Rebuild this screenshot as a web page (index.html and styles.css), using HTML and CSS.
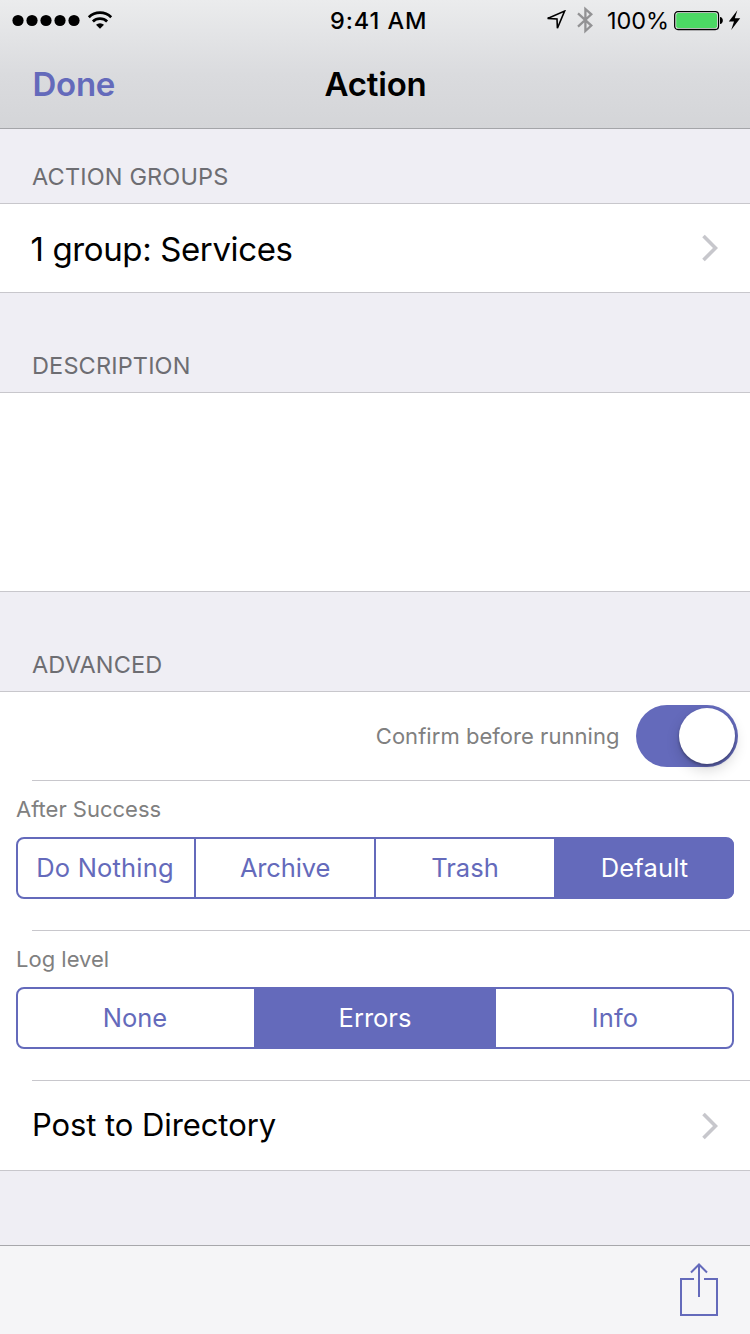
FILE: index.html
```html
<!DOCTYPE html>
<html lang="en">
<head>
<meta charset="utf-8">
<title>Action</title>
<link rel="stylesheet" href="styles.css">
</head>
<body>
<div class="screen">
  <header class="header">
    <div class="status">
      <div class="status-left">
        <svg width="102" height="22" viewBox="0 0 102 22">
          <circle cx="6" cy="11.5" r="5.6"/><circle cx="20" cy="11.5" r="5.6"/><circle cx="34" cy="11.5" r="5.6"/><circle cx="48" cy="11.5" r="5.6"/><circle cx="62" cy="11.5" r="5.6"/>
          <g fill="none" stroke="#000" stroke-width="2.7">
            <path d="M76.8 8.2A16.2 16.2 0 0 1 99.2 8.2"/>
            <path d="M80.9 12.5A10.2 10.2 0 0 1 95.1 12.5"/>
          </g>
          <path d="M84 15.7A6 6 0 0 1 92 15.7L88 19.8Z"/>
        </svg>
      </div>
      <div class="status-time">9:41 AM</div>
      <div class="status-right">
        <svg class="location" width="20" height="21" viewBox="0 0 20 21"><path d="M1.6 8.4L18.6 1.1L11.4 18.2L11 8.9Z" fill="none" stroke="#000" stroke-width="1.6"/></svg>
        <svg class="bluetooth" width="16" height="28" viewBox="0 0 16 28"><path d="M1 7.3L14.3 19.6L8.4 25V3L14.3 8.3L1 20.6" fill="none" stroke="#929294" stroke-width="2.3"/></svg>
        <span class="percent">100%</span>
        <svg class="battery" width="67" height="22" viewBox="0 0 67 22">
          <rect x="0.7" y="1.7" width="43.8" height="17.8" rx="3.2" fill="#f4f6f5" stroke="#000" stroke-width="1.3"/>
          <rect x="2.2" y="3.1" width="40.8" height="15" rx="1.8" fill="#4cd964"/>
          <path d="M46 7C49.8 7.2 49.8 13.8 46 14Z"/>
          <path d="M63.4 0.2L54.8 11.6H60L57.2 20L66.2 8.2H60.8Z"/>
        </svg>
      </div>
    </div>
    <div class="nav">
      <span class="done">Done</span>
      <span class="title">Action</span>
      <span></span>
    </div>
  </header>

  <h2 class="section first">ACTION GROUPS</h2>
  <div class="group">
    <div class="row link services">
      <span class="row-title">1 group: Services</span>
      <svg class="chevron" width="17" height="28" viewBox="0 0 17 28"><path d="M2.5 2L14.5 14L2.5 26" fill="none" stroke="#c7c7cc" stroke-width="3.6"/></svg>
    </div>
  </div>

  <h2 class="section">DESCRIPTION</h2>
  <div class="group description"></div>

  <h2 class="section">ADVANCED</h2>
  <div class="group">
    <div class="row confirm">
      <span class="label confirm-label">Confirm before running</span>
      <span class="switch"><span class="knob"></span></span>
    </div>
    <div class="separator"></div>
    <div class="row field">
      <span class="label">After Success</span>
      <div class="segments four">
        <span class="segment nothing">Do Nothing</span><span class="segment archive">Archive</span><span class="segment">Trash</span><span class="segment on default">Default</span>
      </div>
    </div>
    <div class="separator"></div>
    <div class="row field">
      <span class="label">Log level</span>
      <div class="segments three">
        <span class="segment none">None</span><span class="segment on">Errors</span><span class="segment info">Info</span>
      </div>
    </div>
    <div class="separator"></div>
    <div class="row link post">
      <span class="row-title">Post to Directory</span>
      <svg class="chevron" width="17" height="28" viewBox="0 0 17 28"><path d="M2.5 2L14.5 14L2.5 26" fill="none" stroke="#c7c7cc" stroke-width="3.6"/></svg>
    </div>
  </div>

  <footer class="toolbar">
    <svg width="40" height="56" viewBox="0 0 40 56" fill="none" stroke="#646abb" stroke-width="2">
      <path d="M15 18H2V54H38V18H25"/>
      <path d="M20 36V3.5M12 11.5L20 3.5L28 11.5"/>
    </svg>
  </footer>
</div>
</body>
</html>
```

FILE: styles.css
```css
* { box-sizing: border-box; }

body {
  margin: 0;
  font-family: Inter, "Liberation Sans", sans-serif;
  color: #000;
}

.screen {
  width: 750px;
  height: 1334px;
  background: #efeef4;
  display: flex;
  flex-direction: column;
  overflow: hidden;
}

svg { display: block; flex: none; }

/* Header */
.header {
  height: 129px;
  border-bottom: 1px solid #a4a5a9;
  background: linear-gradient(#ebeced 0, #e3e4e6 35px, #dadbde 75px, #d4d5d8 128px);
}

.status {
  height: 40px;
  display: grid;
  grid-template-columns: 330px auto 1fr;
}

.status-left { padding: 9px 0 0 12px; }

.status-time {
  font-size: 23.5px;
  font-weight: 500;
  letter-spacing: 0.93px;
  line-height: 41px;
}

.status-right {
  display: flex;
  justify-content: flex-end;
  padding-right: 9px;
}

.location { margin: 10px 11px 0 0; }
.bluetooth { margin: 6px 14px 0 0; }

.percent {
  width: 67px;
  font-size: 23.5px;
  letter-spacing: -0.1px;
  line-height: 41px;
}

.battery { margin-top: 10px; }

.nav {
  height: 88px;
  padding: 0 32.5px;
  display: grid;
  grid-template-columns: 292px auto 1fr;
  font-size: 33px;
  font-weight: 600;
  line-height: 88px;
}

.done { color: #646abb; letter-spacing: -0.25px; }
.title { letter-spacing: -0.222px; }

/* Section headings */
.section {
  height: 99px;
  margin: 0;
  padding: 0 32px 14.5px;
  display: flex;
  align-items: flex-end;
  font-size: 23.5px;
  font-weight: 400;
  line-height: 24px;
  letter-spacing: 0.15px;
  color: #6d6d72;
}

.section.first { height: 74px; }

.group {
  background: #fff;
  border-top: 1px solid #c8c7cc;
  border-bottom: 1px solid #c8c7cc;
}

.description { height: 200px; }

.separator {
  height: 1px;
  margin-left: 32px;
  background: #c8c7cc;
}

/* Rows */
.link {
  display: flex;
  align-items: center;
  justify-content: space-between;
  padding: 0 32px;
}

.services {
  height: 88px;
  padding-left: 30.5px;
  font-size: 33px;
  letter-spacing: -0.381px;
}

.services .row-title { padding-top: 2px; }

.post {
  height: 89px;
  font-size: 31px;
  letter-spacing: -0.08px;
}

.post .row-title { padding-bottom: 3px; }
.post .chevron { margin-top: 1px; }

.label {
  display: block;
  font-size: 22px;
  line-height: 28px;
  color: #808080;
}

.confirm {
  height: 88px;
  padding-right: 12px;
  display: flex;
  align-items: center;
  justify-content: flex-end;
  gap: 16.5px;
}

.confirm-label { letter-spacing: 0.04px; padding-bottom: 1px; }

.switch {
  width: 102px;
  height: 62px;
  padding: 3px;
  border-radius: 31px;
  background: #646abb;
  display: flex;
  justify-content: flex-end;
}

.knob {
  width: 56px;
  height: 56px;
  border-radius: 50%;
  background: #fff;
  box-shadow: 0 6px 14px rgba(0, 0, 0, 0.16), 0 2px 3px rgba(0, 0, 0, 0.3);
}

.field {
  height: 149px;
  padding: 14px 16px 0;
}

/* Segmented controls */
.segments {
  height: 62px;
  margin-top: 14px;
  border: 2px solid #646abb;
  border-radius: 8px;
  display: grid;
  color: #646abb;
  font-size: 25.5px;
  line-height: 57px;
  text-align: center;
}

.four { grid-template-columns: 178px 180px 178px 178px; }
.three { grid-template-columns: 236px 242px 236px; }

.segment { height: 58px; }
.four .segment:nth-child(-n+2) { border-right: 2px solid #646abb; }
.segment.on { background: #646abb; color: #fff; }
.segment.nothing { padding-right: 2px; letter-spacing: 0.18px; }
.segment.archive { letter-spacing: -0.15px; }
.segment.default { padding-left: 3px; border-radius: 0 6px 6px 0; box-shadow: 1px 0 0 1px #646abb; letter-spacing: 0.15px; }
.segment.none { padding-right: 2px; }
.segment.info { padding-left: 2px; letter-spacing: 0.1px; }

/* Toolbar */
.toolbar {
  height: 89px;
  margin-top: auto;
  padding: 15px 31px 0 0;
  border-top: 1px solid #a7a7ab;
  background: #f5f5f7;
  display: flex;
  justify-content: flex-end;
}
```
